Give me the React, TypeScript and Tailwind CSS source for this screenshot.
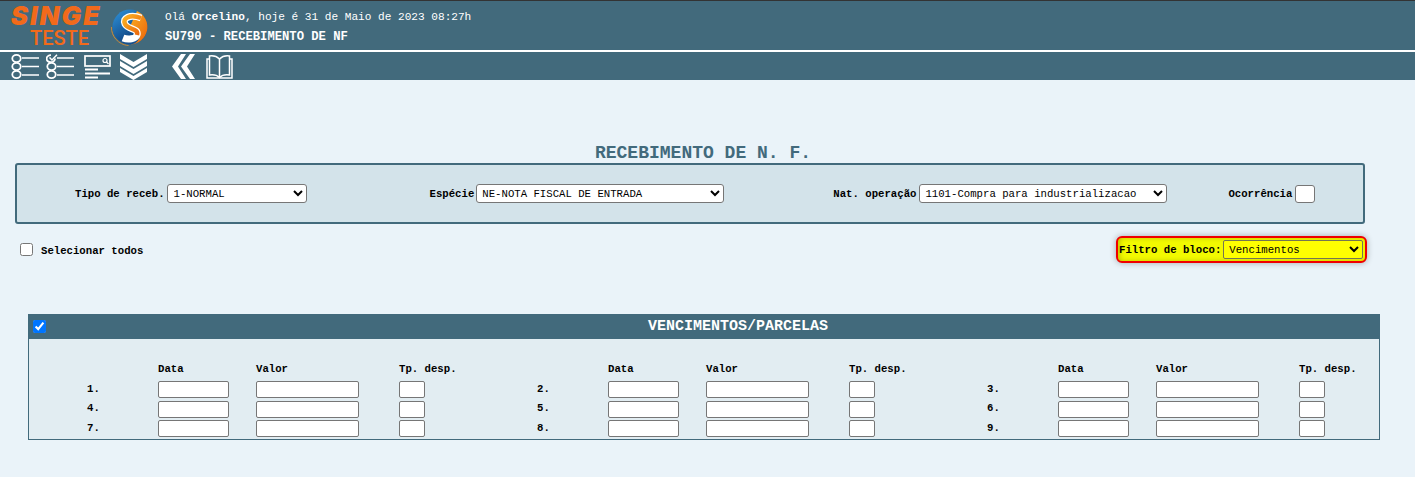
import React from 'react';

const mono = { fontFamily: '"Liberation Mono", monospace' };

const ListIcon = ({ checked }: { checked?: boolean }) => (
  <svg width="29" height="25" viewBox="0 0 29 25" fill="none" stroke="white" strokeWidth="1.800">
    {checked ? (
      <>
        <path d="M9 4.500a4.200 3.500 0 1 1-4-3.300" />
        <path d="M3.500 3.500l2.500 2.500L11 .8" strokeWidth="1.500" />
      </>
    ) : (
      <ellipse cx="5.500" cy="4.500" rx="4.200" ry="3.600" />
    )}
    <ellipse cx="5.500" cy="12.500" rx="4.200" ry="3.600" />
    <ellipse cx="5.500" cy="20.500" rx="4.200" ry="3.600" />
    <path d="M11 4h17M11 12.500h17M11 21h17" strokeWidth="1.300" />
  </svg>
);

const FormIcon = () => (
  <svg width="27" height="25" viewBox="0 0 27 25" fill="none" stroke="white" strokeWidth="1.700">
    <rect x="1" y="2" width="25" height="10" />
    <circle cx="21" cy="6.500" r="2" strokeWidth="1.200" />
    <path d="M22.500 8l2 2" strokeWidth="1.200" />
    <path d="M1 15.500h13M1 19.500h25M1 23.500h13" strokeWidth="2" />
  </svg>
);

const ChevronsDownIcon = () => (
  <svg width="27" height="26" viewBox="0 0 27 26" fill="white">
    <path d="M0 0l13.500 8L27 0v5L13.500 13 0 5z" />
    <path d="M0 7l13.500 8L27 7v5L13.500 20 0 12z" />
    <path d="M0 14l13.500 8L27 14v4l-13.500 8L0 18z" />
  </svg>
);

const ChevronsLeftIcon = () => (
  <svg width="23" height="25" viewBox="0 0 23 25" fill="white">
    <path d="M9 0h5L6 12.500 14 25H9L0 12.500z" />
    <path d="M18 0h5l-8 12.500L23 25h-5L9 12.500z" />
  </svg>
);

const BookIcon = () => (
  <svg width="27" height="25" viewBox="0 0 27 25" fill="none" stroke="white" strokeWidth="1.500">
    <path d="M13.500 5C11 2.500 7 1.500 3.500 2v19c3.500-.5 7.500 0 10 2.500 2.500-2.500 6.500-3 10-2.500V2c-3.500-.5-7.500.5-10 3z" />
    <path d="M13.500 5v18.500" />
    <path d="M3.500 5H1v19h25V5h-2.500" />
  </svg>
);

const LogoMark = () => (
  <svg width="40" height="40" viewBox="0 0 40 40">
    <defs>
      <linearGradient id="disc" x1="0" y1="0" x2="0.7" y2="1">
        <stop offset="0" stopColor="#2f95dd" />
        <stop offset="0.7" stopColor="#14508f" />
      </linearGradient>
      <linearGradient id="flame" x1="0" y1="0" x2="1" y2="1">
        <stop offset="0" stopColor="#fbb024" />
        <stop offset="1" stopColor="#ea620a" />
      </linearGradient>
    </defs>
    <path d="M1.500 20c-.5 9 7 18 17 18.500" fill="none" stroke="#c98a3a" strokeWidth="1" />
    <circle cx="20" cy="20" r="17.500" fill="url(#disc)" />
    <path d="M27 4a17.500 17.500 0 0 1-7 33.500c5 0 10-4 10-10 0-8-10-8-10-8z" fill="url(#flame)" />
    <path
      d="M31 11C20 7 12 11 15 17 18 23 29 21 27 28 26 32 18 33 13 31"
      fill="none"
      stroke="white"
      strokeWidth="7"
    />
    <path
      d="M31 11C20 7 12 11 15 17 18 23 29 21 27 28"
      fill="none"
      stroke="url(#flame)"
      strokeWidth="4.500"
    />
  </svg>
);

const Field = ({ className }: { className: string }) => (
  <input type="text" className={`h-[17px] bg-white border border-[#767676] rounded-[2px] ${className}`} />
);

const Parcela = ({ n }: { n: number }) => (
  <div className="grid grid-cols-[71px_98px_143px_1fr] items-center">
    <span className="-mt-[2px] font-bold">{n}.</span>
    <Field className="w-[71px]" />
    <Field className="w-[103px]" />
    <Field className="w-[26px]" />
  </div>
);

const ParcelaHeader = () => (
  <div className="grid grid-cols-[71px_98px_143px_1fr] items-center font-bold">
    <span />
    <span>Data</span>
    <span>Valor</span>
    <span>Tp. desp.</span>
  </div>
);

export default function App() {
  return (
    <div className="h-[477px] w-[1415px] overflow-hidden bg-[#eaf3f9] text-black" style={mono}>
      {/* Header */}
      <div className="h-[1px] bg-[#333333]" />
      <div className="flex h-[49px] items-start bg-[#426a7c]">
        <div className="ml-[11px] mt-[3px] flex w-[90px] flex-col items-center">
          <span className="h-[24px] text-[26px] font-black italic leading-[24px] tracking-[2px] text-[#f26a1b] [font-family:Inter,sans-serif]">
            SINGE
          </span>
          <span className="ml-[7px] h-[20px] text-[20px] font-medium leading-[20px] text-[#f26a1b] [font-family:Roboto,sans-serif]">
            TESTE
          </span>
        </div>
        <div className="ml-[9px] mt-[6px]">
          <LogoMark />
        </div>
        <div className="ml-[15px] text-white">
          <div className="mt-[9px] text-[11.100px] leading-[14px]">
            Olá <b>Orcelino</b>, hoje é 31 de Maio de 2023 08:27h
          </div>
          <div className="mt-[6px] text-[12.200px] font-bold leading-[14px]">SU790 - RECEBIMENTO DE NF</div>
        </div>
      </div>
      <div className="h-[2px] bg-white" />
      <div className="flex h-[28px] items-start bg-[#426a7c] pl-[11px] pt-[2px]">
        <ListIcon />
        <div className="ml-[6px]">
          <ListIcon checked />
        </div>
        <div className="ml-[9px]">
          <FormIcon />
        </div>
        <div className="ml-[9px]">
          <ChevronsDownIcon />
        </div>
        <div className="ml-[25px]">
          <ChevronsLeftIcon />
        </div>
        <div className="ml-[11px]">
          <BookIcon />
        </div>
      </div>

      {/* Title */}
      <h1 className="mt-[64px] ml-[15px] h-[19px] w-[1376px] text-center text-[18px] font-bold leading-[19px] text-[#426a7c]">
        RECEBIMENTO DE N. F.
      </h1>

      {/* Main panel */}
      <div className="ml-[15px] flex h-[61px] w-[1350px] items-center rounded-[3px] border-2 border-[#426a7c] bg-[#d3e3ea] pl-[58px] text-[10.670px] font-bold">
        <label className="flex items-center gap-[2px]">
          Tipo de receb.
          <select className="h-[19px] w-[140px] rounded-[3px] border border-[#767676] bg-white pl-[2px] font-normal">
            <option>1-NORMAL</option>
          </select>
        </label>
        <label className="ml-[123px] flex items-center gap-[2px]">
          Espécie
          <select className="h-[19px] w-[248px] rounded-[3px] border border-[#767676] bg-white pl-[1px] font-normal">
            <option>NE-NOTA FISCAL DE ENTRADA</option>
          </select>
        </label>
        <label className="ml-[109px] flex items-center gap-[3px]">
          Nat. operação
          <select className="h-[19px] w-[248px] rounded-[3px] border border-[#767676] bg-white pl-[1px] font-normal">
            <option>1101-Compra para industrializacao</option>
          </select>
        </label>
        <label className="ml-[61px] flex items-center gap-[3px]">
          Ocorrência
          <input type="text" className="h-[18px] w-[20px] rounded-[3px] border border-[#767676] bg-white" />
        </label>
      </div>

      {/* Filters */}
      <div className="mt-[12px] flex h-[27px] w-[1367px] items-center justify-between pl-[20px] text-[10.670px] font-bold">
        <label className="flex items-center gap-[8px]">
          <input type="checkbox" className="m-0 h-[13px] w-[13px]" />
          <span className="mt-[2px]">Selecionar todos</span>
        </label>
        <label className="flex h-[27px] w-[251px] items-center gap-[2px] rounded-[6px] border-2 border-[#f00000] bg-[#f2f900] pl-[1px] shadow-[inset_2px_0_5px_rgba(0,0,0,0.2),0_0_6px_rgba(0,0,0,0.3)]">
          Filtro de bloco:
          <select className="h-[19px] w-[140px] rounded-[2px] border border-[#767652] bg-[#ffff00] pl-[1px] font-normal">
            <option>Vencimentos</option>
          </select>
        </label>
      </div>

      {/* Vencimentos */}
      <div className="ml-[28px] mt-[51px] h-[126px] w-[1352px] border border-t-0 border-[#426a7c] bg-[#e2edf2] text-[10.670px]">
        <div className="relative -mx-[1px] flex h-[25px] items-center justify-center bg-[#426a7c] pl-[68px] font-bold text-white">
          <input type="checkbox" defaultChecked className="absolute left-[5px] top-[6px] m-0 h-[13px] w-[13px]" />
          <span className="mt-[2px] text-[15px]">VENCIMENTOS/PARCELAS</span>
        </div>
        <div className="mt-[22px] grid grid-cols-[repeat(3,450px)] pl-[58px]">
          <ParcelaHeader />
          <ParcelaHeader />
          <ParcelaHeader />
        </div>
        <div className="mt-[4px] grid grid-cols-[repeat(3,450px)] gap-y-[2.500px] pl-[58px]">
          {[1, 2, 3, 4, 5, 6, 7, 8, 9].map((n) => (
            <Parcela key={n} n={n} />
          ))}
        </div>
      </div>
    </div>
  );
}
